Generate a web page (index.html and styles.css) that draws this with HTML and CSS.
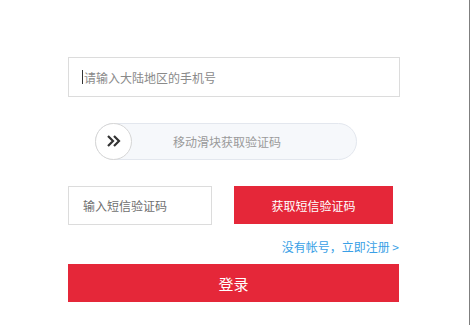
FILE: index.html
```html
<!DOCTYPE html>
<html lang="zh-CN">
<head>
    <meta charset="UTF-8">
    <meta name="viewport" content="width=device-width, initial-scale=1.0">
    <title>登录</title>
    <link rel="stylesheet" href="styles.css">
</head>
<body>
    <div class="page">
        <form class="login-form">
            <div class="field phone">
                <span class="caret"></span>
                <span class="placeholder">请输入大陆地区的手机号</span>
            </div>

            <div class="slider">
                <div class="knob">
                    <svg width="16" height="14" viewBox="0 0 16 14">
                        <path d="M2 2 L7 7 L2 12 M8 2 L13 7 L8 12" fill="none" stroke="#333" stroke-width="2.2"/>
                    </svg>
                </div>
                <span class="slider-text">移动滑块获取验证码</span>
            </div>

            <div class="sms-row">
                <div class="field sms">
                    <span class="placeholder">输入短信验证码</span>
                </div>
                <button type="button" class="btn-red btn-sms">获取短信验证码</button>
            </div>

            <div class="register">
                <a href="#">没有帐号，立即注册 &gt;</a>
            </div>

            <button type="button" class="btn-red btn-login">登录</button>
        </form>
    </div>
</body>
</html>
```

FILE: styles.css
```css
* {
    box-sizing: border-box;
}
body {
    margin: 0;
    font-family: "Noto Sans CJK SC", "Liberation Sans", sans-serif;
    background: #fff;
}
.page {
    width: 470px;
    height: 325px;
    border-right: 1px solid #7f7f7f;
    padding: 57px 0 0 68px;
}
.login-form {
    width: 332px;
    display: flex;
    flex-direction: column;
}
.field {
    height: 40px;
    border: 1px solid #dcdcdc;
    display: flex;
    align-items: center;
    padding-left: 13px;
    font-size: 12px;
    color: #8a8a8a;
    background: #fff;
}
.caret {
    width: 1px;
    height: 14px;
    background: #333;
    margin-right: 1px;
}
.slider {
    margin: 26px 0 0 27px;
    width: 262px;
    height: 37px;
    border: 1px solid #e3e7ee;
    border-radius: 19px;
    background: #f6f8fb;
    display: flex;
    align-items: center;
}
.knob {
    width: 37px;
    height: 37px;
    margin: -1px 0 0 -1px;
    border: 1px solid #d6d6d6;
    border-radius: 50%;
    background: #fff;
    display: flex;
    align-items: center;
    justify-content: center;
}
.slider-text {
    flex: 1;
    text-align: center;
    font-size: 12px;
    color: #9a9a9a;
    padding-right: 34px;
}
.sms-row {
    margin-top: 26px;
    display: flex;
    gap: 22px;
}
.field.sms {
    width: 144px;
    height: 39px;
    padding-left: 14px;
    color: #6f6f6f;
}
.btn-red {
    border: none;
    background: #e52739;
    color: #fff;
    font-family: inherit;
    cursor: pointer;
}
.btn-sms {
    width: 159px;
    height: 38px;
    font-size: 12px;
}
.register {
    margin-top: 13px;
    text-align: right;
    padding-right: 1px;
    font-size: 12px;
    line-height: 17px;
}
.register a {
    color: #3a9fe6;
    text-decoration: none;
}
.btn-login {
    margin-top: 9px;
    width: 331px;
    height: 38px;
    font-size: 15px;
}
```
